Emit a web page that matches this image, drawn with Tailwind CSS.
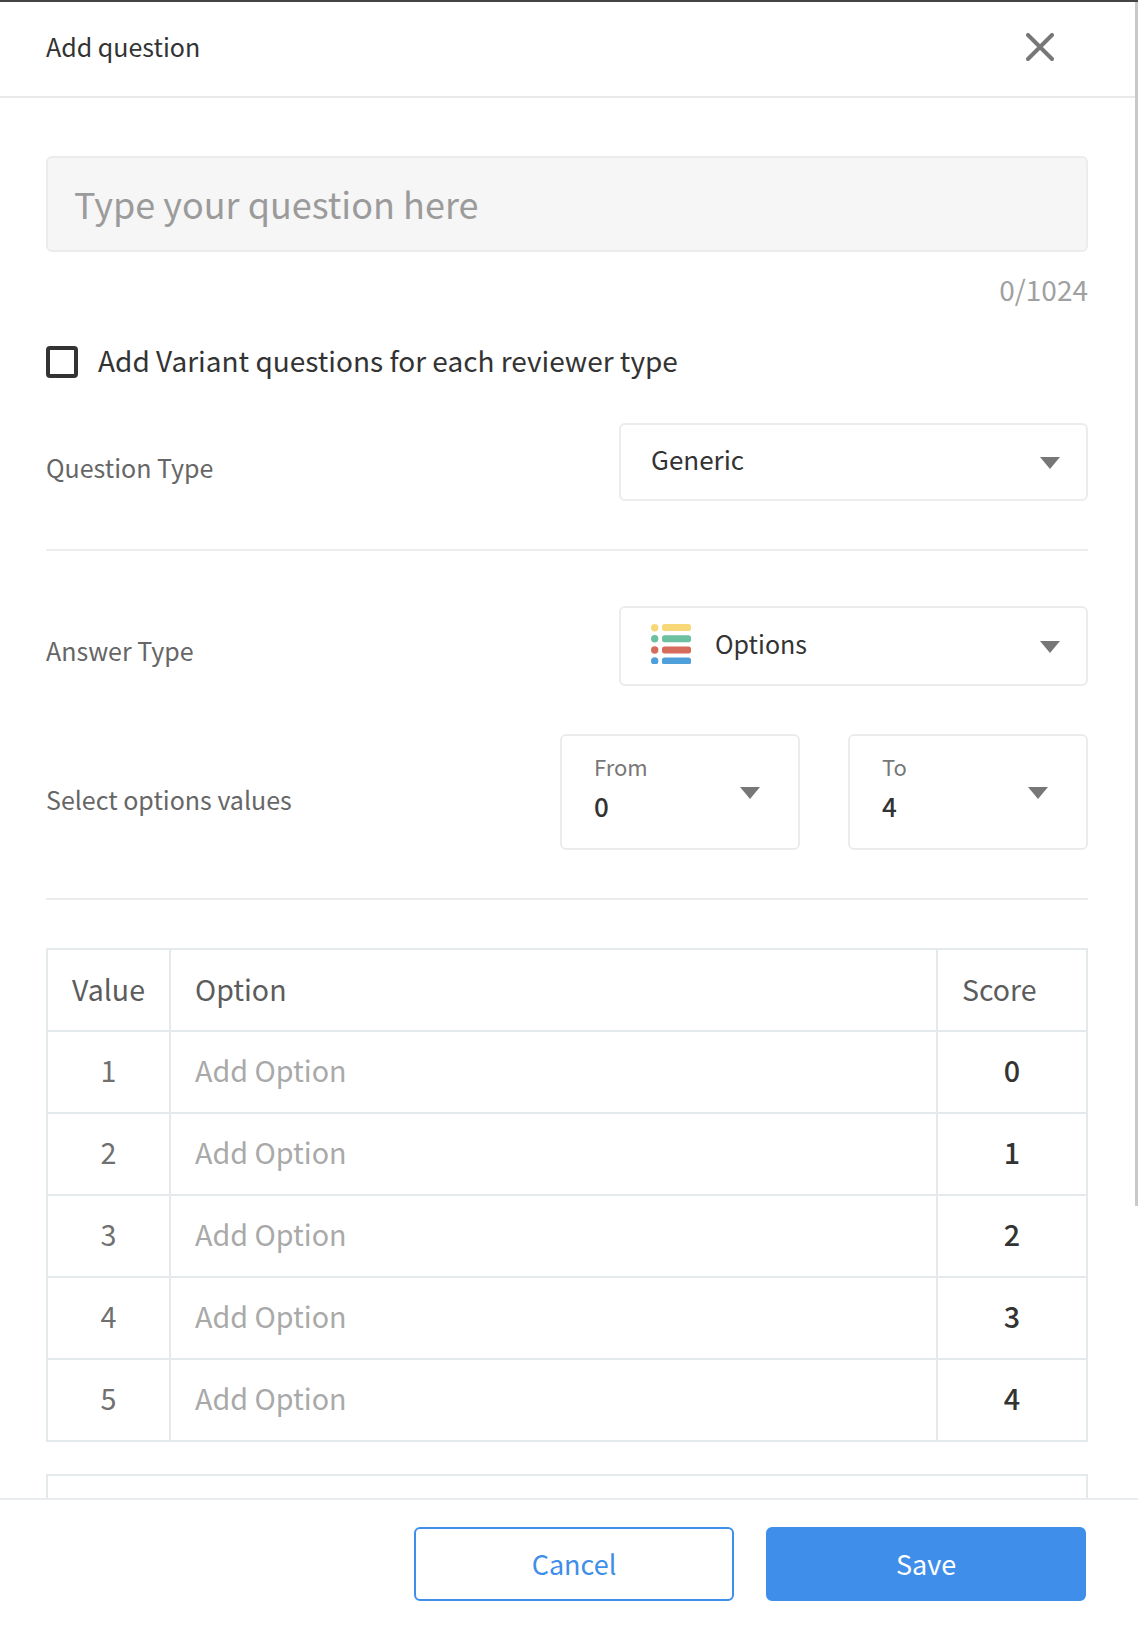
<!DOCTYPE html>
<html>
<head>
<meta charset="utf-8">
<script src="https://cdn.jsdelivr.net/npm/@tailwindcss/browser@4"></script>
</head>
<body class="m-0 bg-white">
<div class="relative flex h-[1628px] w-[1138px] flex-col overflow-hidden border-t-2 border-[#444444] bg-white font-['Noto_Sans_CJK_SC','Noto_Sans',sans-serif] text-[#333333]">
  <div class="absolute right-0 top-0 h-[1204px] w-[3px] bg-[#c9c9c9]"></div>

  <header class="flex h-[96px] shrink-0 items-center justify-between border-b-2 border-[#e9e9e9] pb-[4px] pl-[46px] pr-[84px]">
    <h1 class="relative -top-[1px] text-[25px] leading-[36px] font-normal text-[#333333]">Add question</h1>
    <svg class="h-[28px] w-[28px]" viewBox="0 0 28 28" fill="none" stroke="#777777" stroke-width="4" stroke-linecap="round"><path d="M2 2 L26 26 M26 2 L2 26"/></svg>
  </header>

  <main class="min-h-0 flex-1 overflow-hidden px-[46px] pr-[50px] pt-[58px]">
    <div class="flex h-[96px] items-center rounded-[6px] border-2 border-[#ececec] bg-[#f6f6f6] pb-[2px] pl-[26px] text-[36px] leading-[48px] text-[#9b9b9b]">Type your question here</div>
    <div class="mt-[18px] text-right text-[28px] leading-[38px] text-[#a0a0a0]">0/1024</div>

    <label class="mt-[38px] flex h-[32px] items-center">
      <span class="h-[32px] w-[32px] rounded-[4px] border-[4px] border-[#333333]"></span>
      <span class="relative -top-[2px] ml-[20px] text-[28px] leading-[40px] text-[#333333]">Add Variant questions for each reviewer type</span>
    </label>

    <div class="mt-[45px] flex items-center justify-between">
      <span class="relative top-[5px] text-[25px] leading-[36px] text-[#666666]">Question Type</span>
      <div class="flex h-[78px] w-[469px] items-center justify-between rounded-[6px] border-2 border-[#ececec] pl-[30px] pr-[26px]">
        <span class="relative -top-[3px] text-[26px] leading-[38px] text-[#333333]">Generic</span>
        <svg class="relative top-[1px] h-[12px] w-[20px]" viewBox="0 0 20 12" fill="#777777"><path d="M0 0H20L10 12Z"/></svg>
      </div>
    </div>

    <div class="mt-[48px] h-[2px] bg-[#ececec]"></div>

    <div class="mt-[55px] flex items-center justify-between">
      <span class="relative top-[4px] text-[25px] leading-[36px] text-[#666666]">Answer Type</span>
      <div class="flex h-[80px] w-[469px] items-center justify-between rounded-[6px] border-2 border-[#ececec] pl-[30px] pr-[26px]">
        <span class="flex items-center">
          <svg class="relative -top-[2px] h-[40px] w-[40px]" viewBox="0 0 40 40">
            <circle cx="3.7" cy="3.7" r="3.7" fill="#f7d777"/><rect x="11" y="0" width="29" height="7" rx="2.5" fill="#f7d777"/>
            <circle cx="3.7" cy="14.8" r="3.7" fill="#6cc1a0"/><rect x="11" y="11.2" width="29" height="7" rx="2.5" fill="#6cc1a0"/>
            <circle cx="3.7" cy="26" r="3.7" fill="#d66c5c"/><rect x="11" y="22.4" width="29" height="7" rx="2.5" fill="#d66c5c"/>
            <circle cx="3.7" cy="37" r="3.7" fill="#4f9fdb"/><rect x="11" y="33.5" width="29" height="7" rx="2.5" fill="#4f9fdb"/>
          </svg>
          <span class="relative -top-[3px] ml-[24px] text-[25px] leading-[38px] text-[#333333]">Options</span>
        </span>
        <svg class="relative top-[1px] h-[12px] w-[20px]" viewBox="0 0 20 12" fill="#777777"><path d="M0 0H20L10 12Z"/></svg>
      </div>
    </div>

    <div class="mt-[48px] flex items-center">
      <span class="relative top-[7px] w-[514px] text-[25px] leading-[36px] text-[#666666]">Select options values</span>
      <div class="flex h-[116px] w-[240px] justify-between rounded-[6px] border-2 border-[#ececec] pl-[32px] pr-[38px] pt-[13px]">
        <span class="flex flex-col">
          <span class="text-[22px] leading-[34px] text-[#777777]">From</span>
          <span class="mt-[5px] text-[26px] leading-[36px] font-medium text-[#333333]">0</span>
        </span>
        <svg class="mt-[38px] h-[12px] w-[20px]" viewBox="0 0 20 12" fill="#777777"><path d="M0 0H20L10 12Z"/></svg>
      </div>
      <div class="ml-[48px] flex h-[116px] w-[240px] justify-between rounded-[6px] border-2 border-[#ececec] pl-[32px] pr-[38px] pt-[13px]">
        <span class="flex flex-col">
          <span class="text-[22px] leading-[34px] text-[#777777]">To</span>
          <span class="mt-[5px] text-[26px] leading-[36px] font-medium text-[#333333]">4</span>
        </span>
        <svg class="mt-[38px] h-[12px] w-[20px]" viewBox="0 0 20 12" fill="#777777"><path d="M0 0H20L10 12Z"/></svg>
      </div>
    </div>

    <div class="mt-[48px] h-[2px] bg-[#ececec]"></div>

    <table class="mt-[48px] w-[1040px] table-fixed border-collapse border-2 border-[#e4eaec]">
      <colgroup><col class="w-[123px]"><col class="w-[767px]"><col class="w-[150px]"></colgroup>
      <thead>
        <tr class="h-[82px] text-[28.5px] text-[#5c5c5c]">
          <th class="border-2 border-[#e4eaec] pb-[2px] text-center font-normal">Value</th>
          <th class="border-2 border-[#e4eaec] pb-[2px] pl-[24px] text-left font-normal">Option</th>
          <th class="border-2 border-[#e4eaec] pb-[2px] pl-[24px] text-left font-normal">Score</th>
        </tr>
      </thead>
      <tbody class="text-[28.7px]">
        <tr class="h-[82px]"><td class="border-2 border-[#e4eaec] pb-[4px] text-center text-[#707070]">1</td><td class="border-2 border-[#e4eaec] pb-[4px] pl-[24px] text-[#a9a9a9]">Add Option</td><td class="border-2 border-[#e4eaec] pb-[4px] text-center font-medium text-[#333333]">0</td></tr>
        <tr class="h-[82px]"><td class="border-2 border-[#e4eaec] pb-[4px] text-center text-[#707070]">2</td><td class="border-2 border-[#e4eaec] pb-[4px] pl-[24px] text-[#a9a9a9]">Add Option</td><td class="border-2 border-[#e4eaec] pb-[4px] text-center font-medium text-[#333333]">1</td></tr>
        <tr class="h-[82px]"><td class="border-2 border-[#e4eaec] pb-[4px] text-center text-[#707070]">3</td><td class="border-2 border-[#e4eaec] pb-[4px] pl-[24px] text-[#a9a9a9]">Add Option</td><td class="border-2 border-[#e4eaec] pb-[4px] text-center font-medium text-[#333333]">2</td></tr>
        <tr class="h-[82px]"><td class="border-2 border-[#e4eaec] pb-[4px] text-center text-[#707070]">4</td><td class="border-2 border-[#e4eaec] pb-[4px] pl-[24px] text-[#a9a9a9]">Add Option</td><td class="border-2 border-[#e4eaec] pb-[4px] text-center font-medium text-[#333333]">3</td></tr>
        <tr class="h-[82px]"><td class="border-2 border-[#e4eaec] pb-[4px] text-center text-[#707070]">5</td><td class="border-2 border-[#e4eaec] pb-[4px] pl-[24px] text-[#a9a9a9]">Add Option</td><td class="border-2 border-[#e4eaec] pb-[4px] text-center font-medium text-[#333333]">4</td></tr>
      </tbody>
    </table>

    <div class="mt-[32px] h-[60px] w-[1042px] border-2 border-[#e4eaec]"></div>
  </main>

  <footer class="flex h-[130px] shrink-0 items-start justify-end gap-[32px] border-t-2 border-[#e9ecee] bg-white pr-[52px] pt-[27px]">
    <button class="h-[74px] w-[320px] rounded-[6px] border-2 border-[#3f8ee9] bg-white text-[27px] text-[#3f8ee9]">Cancel</button>
    <button class="h-[74px] w-[320px] rounded-[6px] border-2 border-[#3f8ee9] bg-[#3f8ee9] text-[27px] text-white">Save</button>
  </footer>
</div>
</body>
</html>
